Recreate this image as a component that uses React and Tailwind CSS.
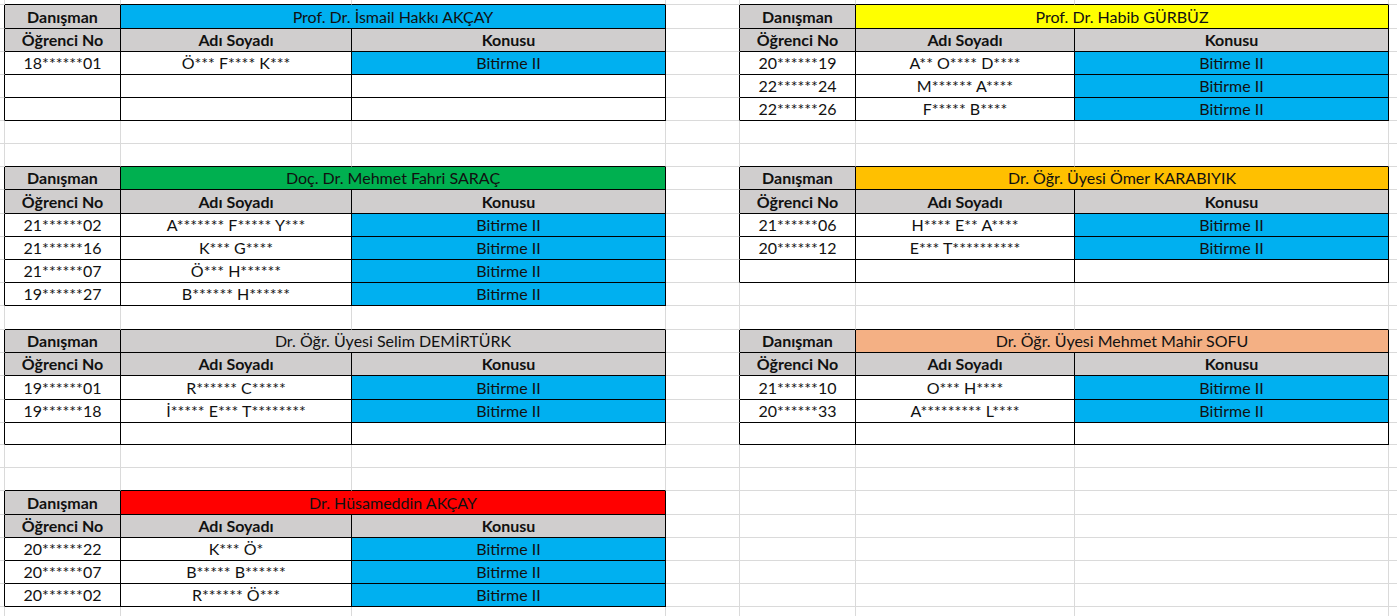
import React from 'react';

const GRAY = 'bg-[#d0cece]';
const BLUE = 'bg-[#00b0f0]';

const tables = [
  {
    row: 1, col: 1, name: 'Prof. Dr. İsmail Hakkı AKÇAY', bg: 'bg-[#00b0f0]',
    rows: [['18******01', 'Ö*** F**** K***', 'Bitirme II'], ['', '', ''], ['', '', '']],
  },
  {
    row: 1, col: 5, name: 'Prof. Dr. Habib GÜRBÜZ', bg: 'bg-[#ffff00]',
    rows: [
      ['20******19', 'A** O**** D****', 'Bitirme II'],
      ['22******24', 'M****** A****', 'Bitirme II'],
      ['22******26', 'F***** B****', 'Bitirme II'],
    ],
  },
  {
    row: 8, col: 1, name: 'Doç. Dr. Mehmet Fahri SARAÇ', bg: 'bg-[#00b050]',
    rows: [
      ['21******02', 'A******* F***** Y***', 'Bitirme II'],
      ['21******16', 'K*** G****', 'Bitirme II'],
      ['21******07', 'Ö*** H******', 'Bitirme II'],
      ['19******27', 'B****** H******', 'Bitirme II'],
    ],
  },
  {
    row: 8, col: 5, name: 'Dr. Öğr. Üyesi Ömer KARABIYIK', bg: 'bg-[#ffc000]',
    rows: [
      ['21******06', 'H**** E** A****', 'Bitirme II'],
      ['20******12', 'E*** T**********', 'Bitirme II'],
      ['', '', ''],
    ],
  },
  {
    row: 15, col: 1, name: 'Dr. Öğr. Üyesi Selim DEMİRTÜRK', bg: 'bg-[#d0cece]',
    rows: [
      ['19******01', 'R****** C*****', 'Bitirme II'],
      ['19******18', 'İ***** E*** T********', 'Bitirme II'],
      ['', '', ''],
    ],
  },
  {
    row: 15, col: 5, name: 'Dr. Öğr. Üyesi Mehmet Mahir SOFU', bg: 'bg-[#f4b084]',
    rows: [
      ['21******10', 'O*** H****', 'Bitirme II'],
      ['20******33', 'A********* L****', 'Bitirme II'],
      ['', '', ''],
    ],
  },
  {
    row: 22, col: 1, name: 'Dr. Hüsameddin AKÇAY', bg: 'bg-[#ff0000]',
    rows: [
      ['20******22', 'K*** Ö*', 'Bitirme II'],
      ['20******07', 'B***** B******', 'Bitirme II'],
      ['20******02', 'R****** Ö***', 'Bitirme II'],
    ],
  },
];

const ROWS = 28;
const COLS = 9;

// build the sheet: every cell is either empty, a table cell, or covered by a merge
const buildSheet = () => {
  const cells = Array.from({ length: ROWS }, () => Array(COLS).fill(null));
  tables.forEach((t) => {
    const { row: r, col: c } = t;
    cells[r][c] = { text: 'Danışman', bg: GRAY, bold: true };
    cells[r][c + 1] = { text: t.name, bg: t.bg, span: 2 };
    cells[r][c + 2] = { skip: true };
    ['Öğrenci No', 'Adı Soyadı', 'Konusu'].forEach((h, i) => {
      cells[r + 1][c + i] = { text: h, bg: GRAY, bold: true };
    });
    t.rows.forEach((d, j) => {
      cells[r + 2 + j][c] = { text: d[0], bg: 'bg-white' };
      cells[r + 2 + j][c + 1] = { text: d[1], bg: 'bg-white' };
      cells[r + 2 + j][c + 2] = { text: d[2], bg: d[2] ? BLUE : 'bg-white' };
    });
  });
  return cells;
};

const Sheet = () => {
  const cells = buildSheet();
  const inTable = (r, c) => r < ROWS && c < COLS && !!cells[r][c];
  const out = [];

  for (let r = 0; r < ROWS; r++) {
    for (let c = 0; c < COLS; c++) {
      const cell = cells[r][c];
      if (cell && cell.skip) continue;
      const span = cell?.span || 1;
      const rightBlack = inTable(r, c) || inTable(r, c + span);
      const bottomBlack = inTable(r, c) || inTable(r + 1, c);
      const lastCol = c + span >= COLS;
      const lastRow = r === ROWS - 1;

      out.push(
        <div
          key={`${r}-${c}`}
          className={`flex items-center justify-center overflow-hidden whitespace-nowrap ${
            span === 2 ? 'col-span-2' : ''
          } ${cell ? cell.bg : 'bg-white'} ${cell?.bold ? 'font-bold' : ''} ${
            lastCol ? '' : 'border-r'
          } ${lastRow ? '' : 'border-b'} ${rightBlack ? 'border-r-black' : 'border-r-[#dadada]'} ${
            bottomBlack ? 'border-b-black' : 'border-b-[#dadada]'
          }`}
        >
          {cell?.text}
        </div>
      );
    }
  }

  return (
    <div className="grid h-[616px] w-[1397px] grid-cols-[5px_116px_231px_314px_74px_116px_219px_314px_1fr] grid-rows-[5px_24px_23px_23px_23px_23px_23px_23px_23px_24px_23px_23px_23px_23px_24px_23px_23px_24px_23px_22px_23px_23px_24px_23px_23px_23px_23px_1fr] overflow-hidden bg-white text-[16px] leading-none text-[#111]">
      {out}
    </div>
  );
};

export default function App() {
  return (
    <div className="h-[616px] w-[1397px] overflow-hidden bg-white" style={{ fontFamily: 'Lato, "Open Sans", sans-serif' }}>
      <Sheet />
    </div>
  );
}
